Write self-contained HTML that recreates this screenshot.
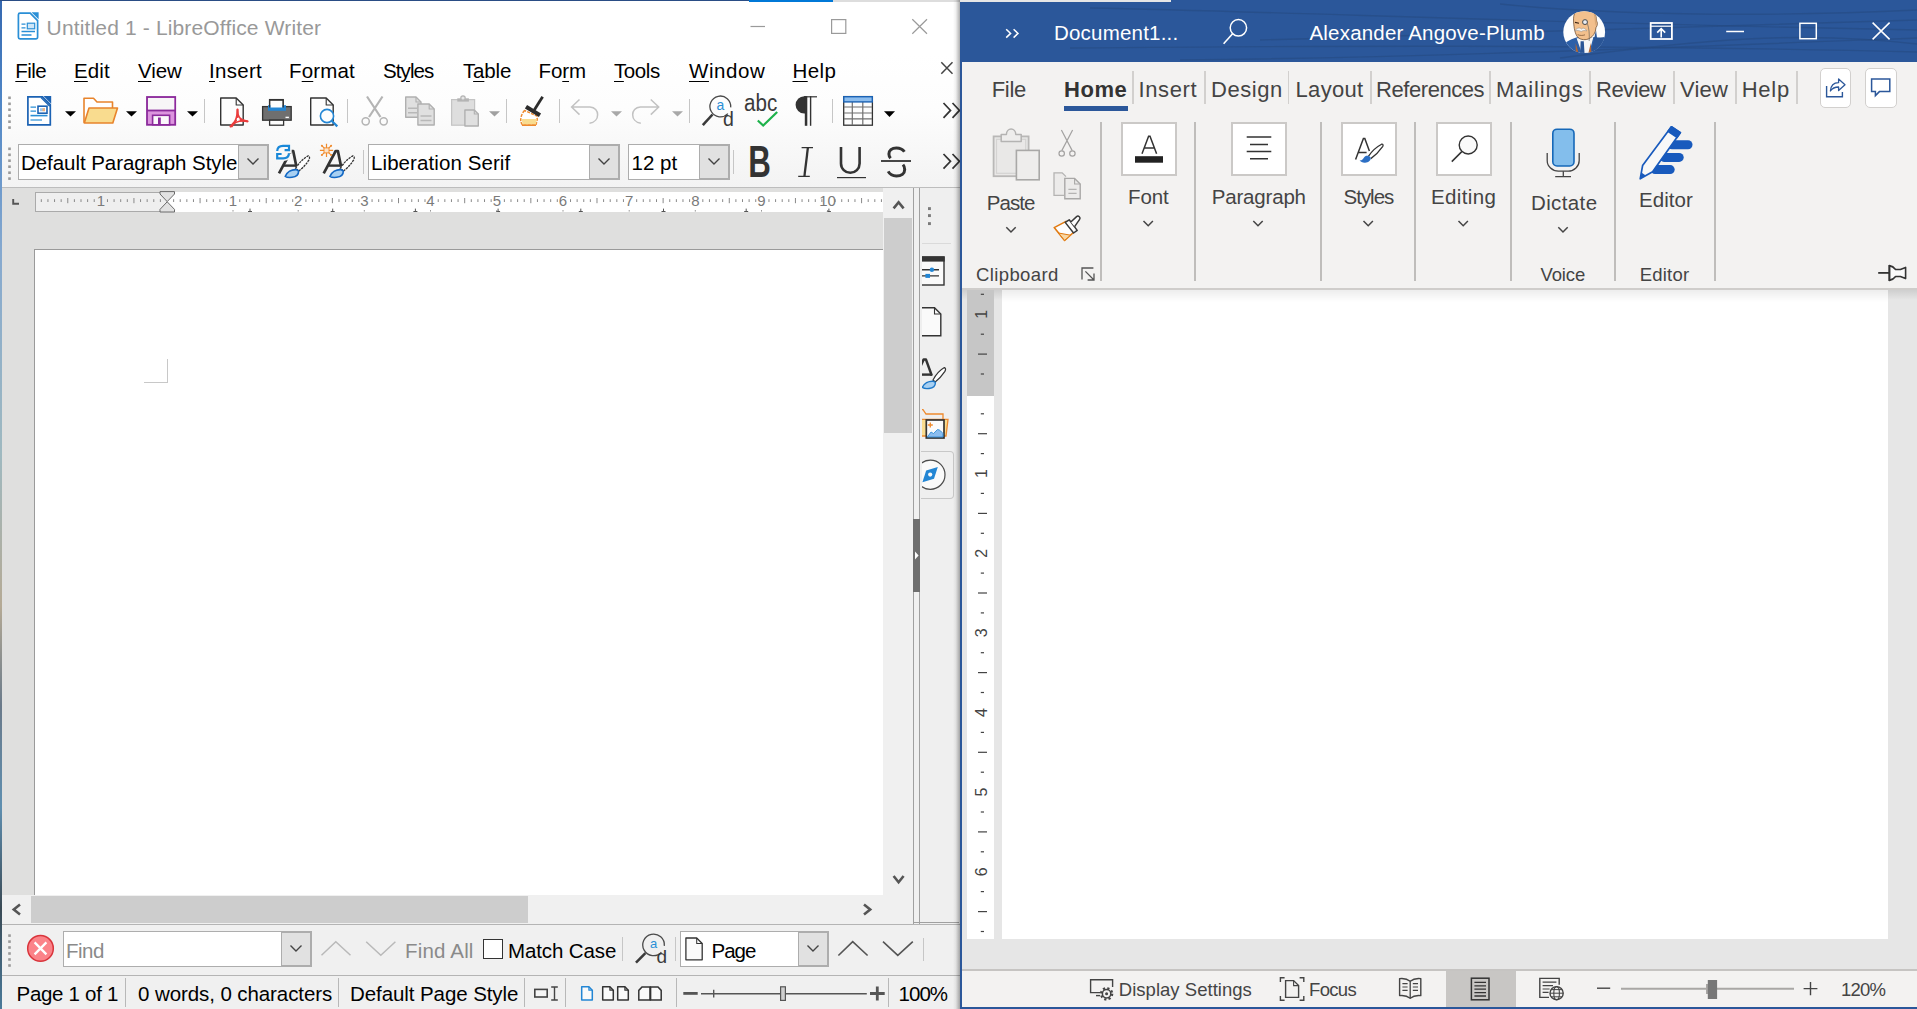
<!DOCTYPE html>
<html><head><meta charset="utf-8"><title>LibreOffice Writer and Word</title>
<style>
html,body{margin:0;padding:0;}
body{width:1917px;height:1009px;overflow:hidden;position:relative;background:#fff;font-family:"Liberation Sans", sans-serif;}
.a{position:absolute;display:block;box-sizing:border-box;}
.t{white-space:pre;}
u{text-decoration:underline;text-underline-offset:2.5px;text-decoration-thickness:1px;}
</style></head><body>
<div class="a" style="left:0px;top:0px;width:960px;height:1009px;background:#ffffff;"></div>
<div class="a" style="left:0px;top:54px;width:960px;height:134px;background:linear-gradient(#ffffff 0%,#fdfdfd 40%,#f3f3f3 100%);"></div>
<div class="a" style="left:0px;top:187px;width:960px;height:1px;background:#bdbdbd;"></div>
<div class="a" style="left:0px;top:188px;width:883px;height:707px;background:#dfdfde;"></div>
<div class="a" style="left:35px;top:192px;width:848px;height:20px;background:#ffffff;"></div>
<div class="a" style="left:35px;top:192px;width:132px;height:20px;background:#efefef;border:1px solid #aaaaaa;border-right:none;"></div>
<div class="a" style="left:34px;top:249px;width:849px;height:646px;background:#ffffff;border-left:1px solid #9a9a9a;border-top:1px solid #9a9a9a;"></div>
<div class="a" style="left:167px;top:359px;width:1px;height:24px;background:#c8c8c8;"></div>
<div class="a" style="left:144px;top:382px;width:24px;height:1px;background:#c8c8c8;"></div>
<div class="a" style="left:883px;top:188px;width:30px;height:707px;background:#f0f0f0;"></div>
<div class="a" style="left:884px;top:218px;width:28px;height:215px;background:#cdcdcd;"></div>
<div class="a" style="left:0px;top:895px;width:913px;height:29px;background:#f0f0f0;"></div>
<div class="a" style="left:31px;top:896px;width:497px;height:27px;background:#cdcdcd;"></div>
<div class="a" style="left:913px;top:188px;width:7px;height:736px;background:#f0f0f0;border-left:1px solid #a0a0a0;border-right:1px solid #a0a0a0;"></div>
<div class="a" style="left:913px;top:519px;width:7px;height:73px;background:#6e6e6e;"></div>
<div class="a" style="left:920px;top:188px;width:40px;height:736px;background:#efefef;"></div>
<div class="a" style="left:913px;top:922px;width:46px;height:1px;background:#a0a0a0;"></div>
<div class="a" style="left:0px;top:924px;width:960px;height:1px;background:#b4b4b4;"></div>
<div class="a" style="left:0px;top:925px;width:960px;height:50px;background:#f0f0f0;"></div>
<div class="a" style="left:0px;top:975px;width:960px;height:1px;background:#b4b4b4;"></div>
<div class="a" style="left:0px;top:976px;width:960px;height:33px;background:#f0f0f0;"></div>
<div class="a" style="left:0px;top:0px;width:2px;height:1009px;background:linear-gradient(#3568b0 0%,#4f86c6 10%,#86a9cf 25%,#9fb9c0 45%,#b5aa95 60%,#6a7a8a 70%,#5f8fb0 80%,#3a4a55 90%,#4a7a9a 100%);"></div>
<div class="a" style="left:0px;top:0px;width:960px;height:1px;background:#2a4d85;"></div>
<div class="a" style="left:749px;top:0px;width:84px;height:2px;background:#0078d7;"></div>
<div class="a" style="left:833px;top:0px;width:127px;height:2px;background:#dddddd;"></div>
<div class="a" style="left:18px;top:144px;width:251px;height:36px;background:#ffffff;border:1px solid #adadad;"></div>
<div class="a" style="left:238px;top:145px;width:30px;height:34px;background:#e1e1e1;border:1px solid #adadad;"></div>
<svg class="a" style="left:246.0px;top:157.0px;" width="14" height="9" viewBox="0 0 14 9"><path d="M1.5 1.5 L7 7 L12.5 1.5" fill="none" stroke="#444" stroke-width="1.4"/></svg>
<div class="a" style="left:368px;top:144px;width:252px;height:36px;background:#ffffff;border:1px solid #adadad;"></div>
<div class="a" style="left:589px;top:145px;width:30px;height:34px;background:#e1e1e1;border:1px solid #adadad;"></div>
<svg class="a" style="left:597.0px;top:157.0px;" width="14" height="9" viewBox="0 0 14 9"><path d="M1.5 1.5 L7 7 L12.5 1.5" fill="none" stroke="#444" stroke-width="1.4"/></svg>
<div class="a" style="left:628px;top:144px;width:102px;height:36px;background:#ffffff;border:1px solid #adadad;"></div>
<div class="a" style="left:699px;top:145px;width:30px;height:34px;background:#e1e1e1;border:1px solid #adadad;"></div>
<svg class="a" style="left:707.0px;top:157.0px;" width="14" height="9" viewBox="0 0 14 9"><path d="M1.5 1.5 L7 7 L12.5 1.5" fill="none" stroke="#444" stroke-width="1.4"/></svg>
<div class="a" style="left:63px;top:931px;width:249px;height:36px;background:#ffffff;border:1px solid #adadad;"></div>
<div class="a" style="left:281px;top:932px;width:30px;height:34px;background:#e1e1e1;border:1px solid #adadad;"></div>
<svg class="a" style="left:289.0px;top:944.0px;" width="14" height="9" viewBox="0 0 14 9"><path d="M1.5 1.5 L7 7 L12.5 1.5" fill="none" stroke="#444" stroke-width="1.4"/></svg>
<div class="a" style="left:483px;top:939px;width:20px;height:20px;background:#ffffff;border:1.3px solid #333;"></div>
<div class="a" style="left:680px;top:931px;width:149px;height:36px;background:#ffffff;border:1px solid #adadad;"></div>
<div class="a" style="left:798px;top:932px;width:30px;height:34px;background:#e1e1e1;border:1px solid #adadad;"></div>
<svg class="a" style="left:806.0px;top:944.0px;" width="14" height="9" viewBox="0 0 14 9"><path d="M1.5 1.5 L7 7 L12.5 1.5" fill="none" stroke="#444" stroke-width="1.4"/></svg>
<div class="a" style="left:125px;top:978px;width:1px;height:29px;background:#b8b8b8;"></div>
<div class="a" style="left:338px;top:978px;width:1px;height:29px;background:#b8b8b8;"></div>
<div class="a" style="left:524px;top:978px;width:1px;height:29px;background:#b8b8b8;"></div>
<div class="a" style="left:565px;top:978px;width:1px;height:29px;background:#b8b8b8;"></div>
<div class="a" style="left:676px;top:978px;width:1px;height:29px;background:#b8b8b8;"></div>
<div class="a" style="left:888px;top:978px;width:1px;height:29px;background:#b8b8b8;"></div>
<svg class="a" style="left:16px;top:11px;" width="24" height="30" viewBox="16 11 24 30">
<path d="M20 13.2H30.2L37.6 20.6V37.2a1.6 1.6 0 0 1-1.6 1.6H20a1.6 1.6 0 0 1-1.6-1.6V14.8a1.6 1.6 0 0 1 1.6-1.6Z" fill="#fff" stroke="#2a8fd6" stroke-width="1.7"/>
<path d="M31.5 12.2H38.6V19.3Z" fill="#2a8fd6"/>
<path d="M21.5 24.2H25.5M21.5 27.8H25.5M21.5 31.5H35M21.5 35H31.5" stroke="#2a8fd6" stroke-width="1.3" fill="none"/>
<rect x="27.3" y="23.2" width="7.4" height="5.6" fill="#cfe6f7" stroke="#2a8fd6" stroke-width="1.2"/>
</svg>
<svg class="a" style="left:749px;top:17px;" width="180" height="19" viewBox="749 17 180 19">
<path d="M750.5 26.5H765" stroke="#9a9a9a" stroke-width="1.2"/>
<rect x="831.6" y="19.6" width="14.2" height="13.8" fill="none" stroke="#9a9a9a" stroke-width="1.2"/>
<path d="M912.3 19.3L927 33.7M927 19.3L912.3 33.7" stroke="#9a9a9a" stroke-width="1.2"/>
</svg>
<svg class="a" style="left:940px;top:61px;" width="14" height="14" viewBox="940 61 14 14"><path d="M941.3 62.3L952.5 73.7M952.5 62.3L941.3 73.7" stroke="#444" stroke-width="1.5"/></svg>
<svg class="a" style="left:7px;top:95px;" width="5" height="35" viewBox="7 95 5 35"><rect x="8.2" y="96.5" width="2.6" height="2.6" fill="#9a9a9a"/><rect x="8.2" y="102.5" width="2.6" height="2.6" fill="#9a9a9a"/><rect x="8.2" y="108.4" width="2.6" height="2.6" fill="#9a9a9a"/><rect x="8.2" y="114.4" width="2.6" height="2.6" fill="#9a9a9a"/><rect x="8.2" y="120.4" width="2.6" height="2.6" fill="#9a9a9a"/><rect x="8.2" y="126.3" width="2.6" height="2.6" fill="#9a9a9a"/></svg>
<svg class="a" style="left:7px;top:146px;" width="5" height="35" viewBox="7 146 5 35"><rect x="8.2" y="147.5" width="2.6" height="2.6" fill="#9a9a9a"/><rect x="8.2" y="153.5" width="2.6" height="2.6" fill="#9a9a9a"/><rect x="8.2" y="159.39999999999998" width="2.6" height="2.6" fill="#9a9a9a"/><rect x="8.2" y="165.39999999999998" width="2.6" height="2.6" fill="#9a9a9a"/><rect x="8.2" y="171.39999999999998" width="2.6" height="2.6" fill="#9a9a9a"/><rect x="8.2" y="177.29999999999998" width="2.6" height="2.6" fill="#9a9a9a"/></svg>
<svg class="a" style="left:7px;top:933px;" width="5" height="35" viewBox="7 933 5 35"><rect x="8.2" y="934.3000000000001" width="2.6" height="2.6" fill="#9a9a9a"/><rect x="8.2" y="940.3000000000001" width="2.6" height="2.6" fill="#9a9a9a"/><rect x="8.2" y="946.2" width="2.6" height="2.6" fill="#9a9a9a"/><rect x="8.2" y="952.2" width="2.6" height="2.6" fill="#9a9a9a"/><rect x="8.2" y="958.2" width="2.6" height="2.6" fill="#9a9a9a"/><rect x="8.2" y="964.2" width="2.6" height="2.6" fill="#9a9a9a"/></svg>
<svg class="a" style="left:26px;top:95px;" width="27" height="32" viewBox="26 95 27 32">
<path d="M27.9 96.9H42.5L50.3 104.7V124.9H27.9Z" fill="#fff" stroke="#1b62b3" stroke-width="1.7"/>
<path d="M43.5 96.1H51.2V103.8Z" fill="#1b62b3"/>
<path d="M41 97.5L49.8 106.3" stroke="#1b62b3" stroke-width="1.3"/>
<path d="M30.5 107.2H36M30.5 111.2H36" stroke="#2a8fd6" stroke-width="1.3"/>
<path d="M30.5 115.6H47.5" stroke="#2a8fd6" stroke-width="1.6"/>
<path d="M30.5 120H42" stroke="#2a8fd6" stroke-width="1.2"/>
<rect x="38" y="106.2" width="9" height="7" fill="#fff" stroke="#1b62b3" stroke-width="1.6"/>
<rect x="40" y="108.2" width="5" height="3" fill="#9cc8ee"/><rect x="42.5" y="108.2" width="2.5" height="3" fill="#f3b27a"/>
</svg>
<svg class="a" style="left:64px;top:110px;" width="13" height="8" viewBox="64 110 13 8"><path d="M65 111.2H76L70.5 116.6Z" fill="#000"/></svg>
<svg class="a" style="left:82px;top:96px;" width="38" height="29" viewBox="82 96 38 29">
<path d="M84 122.8V98.2H93.5L97 102H112.5V108" fill="#fff" stroke="#e8842c" stroke-width="1.6" stroke-linejoin="round"/>
<path d="M84.3 123L89 108H117.5L112.8 123Z" fill="#f9dc8f" stroke="#e8842c" stroke-width="1.6" stroke-linejoin="round"/>
</svg>
<svg class="a" style="left:125px;top:110px;" width="13" height="8" viewBox="125 110 13 8"><path d="M126 111.2H137L131.5 116.6Z" fill="#000"/></svg>
<svg class="a" style="left:145px;top:95px;" width="33" height="32" viewBox="145 95 33 32">
<rect x="147" y="97" width="28.2" height="27.8" fill="#dc94de" stroke="#8b2a9b" stroke-width="1.8"/>
<rect x="148" y="98" width="26.2" height="12" fill="#f7f5f7"/>
<path d="M147 110.5H175.2" stroke="#8b2a9b" stroke-width="1.8"/>
<rect x="152.6" y="115.3" width="17" height="9.5" fill="#fbf8fb" stroke="#8b2a9b" stroke-width="1.6"/>
<rect x="158" y="117.5" width="2.8" height="7" fill="#8b2a9b"/>
</svg>
<svg class="a" style="left:186px;top:110px;" width="13" height="8" viewBox="186 110 13 8"><path d="M187 111.2H198L192.5 116.6Z" fill="#000"/></svg>
<div class="a" style="left:204px;top:99.2px;width:1px;height:23.599999999999994px;background:#c6c6c6;"></div>
<svg class="a" style="left:218px;top:96px;" width="31" height="32" viewBox="218 96 31 32"><path d="M220.7 98H236.2L243.2 105V125H220.7Z" fill="#fdfdfd" stroke="#333" stroke-width="1.4" stroke-linejoin="round"/><path d="M236.2 98V105H243.2" fill="none" stroke="#333" stroke-width="1.1199999999999999" stroke-linejoin="round"/>
<path d="M232 126.5C236 121 237.5 116 237.5 109.5C237.5 116 239 119.5 247.5 121.5C240 120 235 121.5 231 126.5Z" fill="none" stroke="#ea3c3c" stroke-width="1.6" stroke-linejoin="round"/>
<path d="M237.5 109.5V117M230.5 126.5L236 120.5M247.5 121.3L240.5 120" stroke="#ea3c3c" stroke-width="2" stroke-linecap="round"/>
</svg>
<svg class="a" style="left:260px;top:98px;" width="34" height="29" viewBox="260 98 34 29">
<rect x="269.6" y="99.6" width="13.6" height="9" fill="#fdfdfd" stroke="#333" stroke-width="1.3"/>
<rect x="262.6" y="106.6" width="28.6" height="13.6" fill="#6f6f6f" stroke="#333" stroke-width="1.3"/>
<rect x="268" y="105.2" width="18" height="5.6" fill="#2386d4"/>
<rect x="270.6" y="101" width="11.6" height="6.5" fill="#fdfdfd"/>
<path d="M269.6 107.5V100 H283.2V107.5" fill="none" stroke="#333" stroke-width="1.3"/>
<rect x="269.6" y="120.2" width="14" height="5" fill="#fdfdfd" stroke="#333" stroke-width="1.3"/>
<rect x="285.5" y="116.7" width="3.4" height="1.4" fill="#fff"/>
</svg>
<svg class="a" style="left:308px;top:96px;" width="32" height="33" viewBox="308 96 32 33"><path d="M310.7 98H326.2L333.2 105V125H310.7Z" fill="#fdfdfd" stroke="#333" stroke-width="1.4" stroke-linejoin="round"/><path d="M326.2 98V105H333.2" fill="none" stroke="#333" stroke-width="1.1199999999999999" stroke-linejoin="round"/>
<circle cx="327" cy="116" r="6.6" fill="#fdfdfd" stroke="#2386d4" stroke-width="1.6"/>
<path d="M331.6 120.8L337.3 126.4" stroke="#2386d4" stroke-width="2.2"/>
</svg>
<div class="a" style="left:347px;top:99.2px;width:1px;height:23.599999999999994px;background:#c6c6c6;"></div>
<svg class="a" style="left:359px;top:95px;" width="31" height="32" viewBox="359 95 31 32">
<path d="M367 96.5L380.5 117M382.5 96.5L369 117" stroke="#b4b4b4" stroke-width="2.2"/>
<circle cx="365.7" cy="121.3" r="3.6" fill="none" stroke="#b4b4b4" stroke-width="1.5"/>
<circle cx="383.7" cy="121.3" r="3.6" fill="none" stroke="#b4b4b4" stroke-width="1.5"/>
</svg>
<svg class="a" style="left:403px;top:95px;" width="34" height="32" viewBox="403 95 34 32"><path d="M405.7 97H416L421 102V117.3H405.7Z" fill="#e0e0e0" stroke="#b0b0b0" stroke-width="1.4" stroke-linejoin="round"/><path d="M416 97V102H421" fill="none" stroke="#b0b0b0" stroke-width="1.1199999999999999" stroke-linejoin="round"/><path d="M408 108.3H417M408 112.8H417" stroke="#b8b8b8" stroke-width="1.4"/><path d="M417.9 104H429.2L434.2 109V125H417.9Z" fill="#e0e0e0" stroke="#b0b0b0" stroke-width="1.4" stroke-linejoin="round"/><path d="M429.2 104V109H434.2" fill="none" stroke="#b0b0b0" stroke-width="1.1199999999999999" stroke-linejoin="round"/><path d="M420.5 116H431.5M420.5 120.5H431.5" stroke="#b8b8b8" stroke-width="1.4"/></svg>
<svg class="a" style="left:449px;top:94px;" width="32" height="34" viewBox="449 94 32 34">
<rect x="451.6" y="99.6" width="23" height="25.6" fill="#dedede" stroke="#c4c4c4" stroke-width="1.2"/>
<rect x="457.3" y="98.3" width="11.6" height="3.3" fill="#b4b4b4"/>
<circle cx="463" cy="98" r="2.2" fill="#e6e6e6" stroke="#b4b4b4" stroke-width="1.2"/>
<path d="M464.9 110H474.3L478.3 114V126H464.9Z" fill="#e0e0e0" stroke="#b0b0b0" stroke-width="1.4" stroke-linejoin="round"/><path d="M474.3 110V114H478.3" fill="none" stroke="#b0b0b0" stroke-width="1.1199999999999999" stroke-linejoin="round"/></svg>
<svg class="a" style="left:488px;top:110px;" width="13" height="8" viewBox="488 110 13 8"><path d="M489 111.2H500L494.5 116.6Z" fill="#a0a0a0"/></svg>
<div class="a" style="left:506px;top:99.2px;width:1px;height:23.599999999999994px;background:#c6c6c6;"></div>
<svg class="a" style="left:518px;top:95px;" width="28" height="33" viewBox="518 95 28 33">
<path d="M524.5 110.5C521 114.5 520.5 119 520.8 122L522.5 125H536L537.2 119.5 537 116Z" fill="#fff" stroke="#ee8a2e" stroke-width="1.5" stroke-linejoin="round" stroke-dasharray="3 1.2"/>
<path d="M521.5 119H536.7L536 124.6H522.8Z" fill="#f9dc8f"/>
<path d="M522 125.2H536" stroke="#ee8a2e" stroke-width="1.6"/>
<path d="M526 106.8L540 115.2" stroke="#2c2c2c" stroke-width="4.2"/>
<path d="M534.3 110L542.6 96.8" stroke="#2c2c2c" stroke-width="2.8"/>
</svg>
<div class="a" style="left:559px;top:99.2px;width:1px;height:23.599999999999994px;background:#c6c6c6;"></div>
<svg class="a" style="left:569px;top:97px;" width="31" height="29" viewBox="569 97 31 29">
<path d="M579.5 99.5L571.6 107L579.5 114.6M571.6 107H590C600 107.5 600.5 121.5 589.5 123.3" fill="none" stroke="#c2c2c2" stroke-width="1.5"/>
</svg>
<svg class="a" style="left:610px;top:110px;" width="13" height="8" viewBox="610 110 13 8"><path d="M611 111.2H622L616.5 116.6Z" fill="#a8a8a8"/></svg>
<svg class="a" style="left:630px;top:97px;" width="31" height="29" viewBox="630 97 31 29">
<path d="M650.8 99.5L658.7 107L650.8 114.6M658.7 107H640.3C630.3 107.5 629.8 121.5 640.8 123.3" fill="none" stroke="#c2c2c2" stroke-width="1.5"/>
</svg>
<svg class="a" style="left:671px;top:110px;" width="13" height="8" viewBox="671 110 13 8"><path d="M672 111.2H683L677.5 116.6Z" fill="#a8a8a8"/></svg>
<div class="a" style="left:689px;top:99.2px;width:1px;height:23.599999999999994px;background:#c6c6c6;"></div>
<svg class="a" style="left:700px;top:94px;" width="36" height="34" viewBox="700 94 36 34"><path d="M727.9 113.6A10.4 10.4 0 1 1 730.7 107.4" fill="none" stroke="#4a4a4a" stroke-width="1.3"/><path d="M712.5 114.5L702.8 125.2" stroke="#3a3a3a" stroke-width="2.6"/><text x="720.4" y="110.2" font-family='"Liberation Sans",sans-serif' font-size="14" fill="#2a8fd6" text-anchor="middle">a</text><text x="723" y="125.6" font-family='"Liberation Sans",sans-serif' font-size="19.5" fill="#3a3a3a">d</text></svg>
<svg class="a" style="left:743px;top:91px;" width="37" height="38" viewBox="743 91 37 38">
<text x="744" y="110.7" font-family='"Liberation Sans",sans-serif' font-size="23" fill="#3a3a3a" textLength="33.2" lengthAdjust="spacingAndGlyphs">abc</text>
<path d="M757.8 120.5L763.2 125.6L777.2 112" fill="none" stroke="#1eb24b" stroke-width="2.2"/>
</svg>
<svg class="a" style="left:793px;top:94px;" width="26" height="34" viewBox="793 94 26 34">
<path d="M806.2 96.2H804.3A8.7 8.7 0 0 0 804.3 113.6H806.2Z" fill="#333"/>
<rect x="804.8" y="96.2" width="2.5" height="29.6" fill="#333"/>
<rect x="809.9" y="96.2" width="1.4" height="29.6" fill="#333"/>
<rect x="804" y="96.2" width="13" height="1.2" fill="#333"/>
</svg>
<div class="a" style="left:832px;top:99.2px;width:1px;height:23.599999999999994px;background:#c6c6c6;"></div>
<svg class="a" style="left:841px;top:94px;" width="34" height="34" viewBox="841 94 34 34">
<rect x="843.7" y="96.6" width="28.7" height="28.6" fill="#fdfdfd" stroke="#333" stroke-width="1.3"/>
<path d="M844 107H872M844 113H872M844 118.8H872M852.3 102V125M862.8 102V125" stroke="#6f6f6f" stroke-width="1.2"/>
<rect x="843.8" y="96.7" width="28.5" height="5.2" fill="#8cbdee" stroke="#1b62b3" stroke-width="1.4"/>
</svg>
<svg class="a" style="left:883px;top:110px;" width="13" height="8" viewBox="883 110 13 8"><path d="M884 111.2H895L889.5 116.9Z" fill="#000"/></svg>
<svg class="a" style="left:941px;top:101px;" width="20" height="19" viewBox="941 101 20 19"><path d="M943.5 103L950.5 110.4L943.5 117.8M952.5 103L959.5 110.4L952.5 117.8" fill="none" stroke="#333" stroke-width="1.7"/></svg>
<svg class="a" style="left:941px;top:152px;" width="20" height="18" viewBox="941 152 20 18"><path d="M943.5 154L950.5 161.3L943.5 168.6M952.5 154L959.5 161.3L952.5 168.6" fill="none" stroke="#333" stroke-width="1.7"/></svg>
<svg class="a" style="left:274px;top:142px;" width="38" height="38" viewBox="274 142 38 38"><g transform="translate(0 0)">
<path d="M279 173.4L291 151H293.2L296.4 166.4" fill="none" stroke="#333" stroke-width="2.7" stroke-linejoin="round"/>
<path d="M283.6 165.6H296" stroke="#333" stroke-width="2.4"/>
</g><path d="M277.2 151C277.4 147.4 280 145.9 283 145.9H288.6M289 144.8V150.2H284.6M289 153.4C288.8 156.8 286.2 158.3 283.2 158.3H277.6M277.2 159.4V154H281.6" fill="none" stroke="#f8f8f8" stroke-width="5.4"/><path d="M277.2 151C277.4 147.4 280 145.9 283 145.9H288.6M289 144.8V150.2H284.6M289 153.4C288.8 156.8 286.2 158.3 283.2 158.3H277.6M277.2 159.4V154H281.6" fill="none" stroke="#1a88d8" stroke-width="2.2"/><g transform="translate(0 0)">
<path d="M295.6 168.4C299 162.6 304.4 157.6 308.2 155.8C310 156.4 309.8 158.4 308.8 160.2C305.4 165.4 301.6 169 298.8 171Z" fill="#fff" stroke="#333" stroke-width="1.3" stroke-dasharray="2.4 0.8"/>
<path d="M285.3 176.4C287 172 291.5 169.4 296.2 169.6L298.6 171C298.7 174.6 296.5 176.8 292 177.3C289 177.6 286.5 177.3 285.3 176.4Z" fill="#a8d0f2" stroke="#1368c4" stroke-width="1.6"/>
</g></svg>
<svg class="a" style="left:318px;top:142px;" width="39" height="38" viewBox="318 142 39 38"><g transform="translate(44.7 0)">
<path d="M279 173.4L291 151H293.2L296.4 166.4" fill="none" stroke="#333" stroke-width="2.7" stroke-linejoin="round"/>
<path d="M283.6 165.6H296" stroke="#333" stroke-width="2.4"/>
</g><path d="M326.5 143.8V157M319.9 150.4H333.1M321.8 145.7L331.2 155.1M331.2 145.7L321.8 155.1" stroke="#f8f8f8" stroke-width="5"/><path d="M326.5 143.8V157M319.9 150.4H333.1M321.8 145.7L331.2 155.1M331.2 145.7L321.8 155.1" stroke="#f08a2c" stroke-width="1.2"/>
<rect x="324" y="147.9" width="5" height="5" fill="#fde3c8" stroke="#f08a2c" stroke-width="0.9"/>
<circle cx="321.9" cy="145.8" r="1" fill="#f08a2c"/><circle cx="331.1" cy="145.8" r="1" fill="#f08a2c"/><circle cx="321.9" cy="155" r="1" fill="#f08a2c"/><circle cx="331.1" cy="155" r="1" fill="#f08a2c"/><g transform="translate(44.7 0)">
<path d="M295.6 168.4C299 162.6 304.4 157.6 308.2 155.8C310 156.4 309.8 158.4 308.8 160.2C305.4 165.4 301.6 169 298.8 171Z" fill="#fff" stroke="#333" stroke-width="1.3" stroke-dasharray="2.4 0.8"/>
<path d="M285.3 176.4C287 172 291.5 169.4 296.2 169.6L298.6 171C298.7 174.6 296.5 176.8 292 177.3C289 177.6 286.5 177.3 285.3 176.4Z" fill="#a8d0f2" stroke="#1368c4" stroke-width="1.6"/>
</g></svg>
<div class="a" style="left:363px;top:150.2px;width:1px;height:23.5px;background:#c6c6c6;"></div>
<div class="a" style="left:733px;top:150.2px;width:1px;height:23.5px;background:#c6c6c6;"></div>
<svg class="a" style="left:747px;top:144px;" width="26" height="35" viewBox="747 144 26 35"><text x="748.2" y="177" font-family='"Liberation Sans",sans-serif' font-weight="700" font-size="43.5" fill="#333" textLength="22.6" lengthAdjust="spacingAndGlyphs">B</text></svg>
<svg class="a" style="left:796px;top:145px;" width="19" height="34" viewBox="796 145 19 34">
<path d="M801.6 147.6H813M798.2 176.4H809.8" stroke="#333" stroke-width="1.4"/>
<path d="M807.9 147.6L804.4 176.4" stroke="#333" stroke-width="2.3"/>
</svg>
<svg class="a" style="left:835px;top:145px;" width="33" height="35" viewBox="835 145 33 35">
<path d="M841 147V163.5A9.3 9.3 0 0 0 859.6 163.5V147" fill="none" stroke="#333" stroke-width="2.6"/>
<path d="M837 177.6H866" stroke="#333" stroke-width="1.2"/>
</svg>
<svg class="a" style="left:879px;top:145px;" width="34" height="34" viewBox="879 145 34 34">
<path d="M904.4 151.8C902.6 149 899.8 147.9 896.4 147.9C891.8 147.9 888.9 150.5 888.9 154C888.9 155.6 889.5 157 890.6 158.2" fill="none" stroke="#333" stroke-width="3"/>
<path d="M888.2 171.4C889.8 174.4 892.8 176 896.4 176C901.4 176 904.7 173.4 904.7 169.4C904.7 167.6 904.1 166 903 164.6" fill="none" stroke="#333" stroke-width="3"/>
<path d="M881 161H911" stroke="#333" stroke-width="1.8"/>
</svg>
<svg class="a" style="left:34px;top:189px;" width="851" height="25" viewBox="34 189 851 25"><rect x="40.81" y="199.20" width="1" height="2.8" fill="#8a8a8a"/><rect x="47.43" y="199.20" width="1" height="2.8" fill="#8a8a8a"/><rect x="54.04" y="199.20" width="1" height="2.8" fill="#8a8a8a"/><rect x="60.66" y="199.20" width="1" height="2.8" fill="#8a8a8a"/><rect x="67.27" y="198.00" width="1" height="5.2" fill="#8a8a8a"/><rect x="73.89" y="199.20" width="1" height="2.8" fill="#8a8a8a"/><rect x="80.50" y="199.20" width="1" height="2.8" fill="#8a8a8a"/><rect x="87.12" y="199.20" width="1" height="2.8" fill="#8a8a8a"/><rect x="93.73" y="199.20" width="1" height="2.8" fill="#8a8a8a"/><rect x="106.97" y="199.20" width="1" height="2.8" fill="#8a8a8a"/><rect x="113.58" y="199.20" width="1" height="2.8" fill="#8a8a8a"/><rect x="120.19" y="199.20" width="1" height="2.8" fill="#8a8a8a"/><rect x="126.81" y="199.20" width="1" height="2.8" fill="#8a8a8a"/><rect x="133.43" y="198.00" width="1" height="5.2" fill="#8a8a8a"/><rect x="140.04" y="199.20" width="1" height="2.8" fill="#8a8a8a"/><rect x="146.66" y="199.20" width="1" height="2.8" fill="#8a8a8a"/><rect x="153.27" y="199.20" width="1" height="2.8" fill="#8a8a8a"/><rect x="159.88" y="199.20" width="1" height="2.8" fill="#8a8a8a"/><rect x="173.12" y="199.20" width="1" height="2.8" fill="#8a8a8a"/><rect x="179.73" y="199.20" width="1" height="2.8" fill="#8a8a8a"/><rect x="186.34" y="199.20" width="1" height="2.8" fill="#8a8a8a"/><rect x="192.96" y="199.20" width="1" height="2.8" fill="#8a8a8a"/><rect x="199.57" y="198.00" width="1" height="5.2" fill="#8a8a8a"/><rect x="206.19" y="199.20" width="1" height="2.8" fill="#8a8a8a"/><rect x="212.81" y="199.20" width="1" height="2.8" fill="#8a8a8a"/><rect x="219.42" y="199.20" width="1" height="2.8" fill="#8a8a8a"/><rect x="226.03" y="199.20" width="1" height="2.8" fill="#8a8a8a"/><rect x="239.27" y="199.20" width="1" height="2.8" fill="#8a8a8a"/><rect x="245.88" y="199.20" width="1" height="2.8" fill="#8a8a8a"/><rect x="252.50" y="199.20" width="1" height="2.8" fill="#8a8a8a"/><rect x="259.11" y="199.20" width="1" height="2.8" fill="#8a8a8a"/><rect x="265.73" y="198.00" width="1" height="5.2" fill="#8a8a8a"/><rect x="272.34" y="199.20" width="1" height="2.8" fill="#8a8a8a"/><rect x="278.96" y="199.20" width="1" height="2.8" fill="#8a8a8a"/><rect x="285.57" y="199.20" width="1" height="2.8" fill="#8a8a8a"/><rect x="292.19" y="199.20" width="1" height="2.8" fill="#8a8a8a"/><rect x="305.42" y="199.20" width="1" height="2.8" fill="#8a8a8a"/><rect x="312.03" y="199.20" width="1" height="2.8" fill="#8a8a8a"/><rect x="318.64" y="199.20" width="1" height="2.8" fill="#8a8a8a"/><rect x="325.26" y="199.20" width="1" height="2.8" fill="#8a8a8a"/><rect x="331.88" y="198.00" width="1" height="5.2" fill="#8a8a8a"/><rect x="338.49" y="199.20" width="1" height="2.8" fill="#8a8a8a"/><rect x="345.11" y="199.20" width="1" height="2.8" fill="#8a8a8a"/><rect x="351.72" y="199.20" width="1" height="2.8" fill="#8a8a8a"/><rect x="358.34" y="199.20" width="1" height="2.8" fill="#8a8a8a"/><rect x="371.56" y="199.20" width="1" height="2.8" fill="#8a8a8a"/><rect x="378.18" y="199.20" width="1" height="2.8" fill="#8a8a8a"/><rect x="384.80" y="199.20" width="1" height="2.8" fill="#8a8a8a"/><rect x="391.41" y="199.20" width="1" height="2.8" fill="#8a8a8a"/><rect x="398.02" y="198.00" width="1" height="5.2" fill="#8a8a8a"/><rect x="404.64" y="199.20" width="1" height="2.8" fill="#8a8a8a"/><rect x="411.25" y="199.20" width="1" height="2.8" fill="#8a8a8a"/><rect x="417.87" y="199.20" width="1" height="2.8" fill="#8a8a8a"/><rect x="424.49" y="199.20" width="1" height="2.8" fill="#8a8a8a"/><rect x="437.72" y="199.20" width="1" height="2.8" fill="#8a8a8a"/><rect x="444.33" y="199.20" width="1" height="2.8" fill="#8a8a8a"/><rect x="450.95" y="199.20" width="1" height="2.8" fill="#8a8a8a"/><rect x="457.56" y="199.20" width="1" height="2.8" fill="#8a8a8a"/><rect x="464.18" y="198.00" width="1" height="5.2" fill="#8a8a8a"/><rect x="470.79" y="199.20" width="1" height="2.8" fill="#8a8a8a"/><rect x="477.41" y="199.20" width="1" height="2.8" fill="#8a8a8a"/><rect x="484.02" y="199.20" width="1" height="2.8" fill="#8a8a8a"/><rect x="490.64" y="199.20" width="1" height="2.8" fill="#8a8a8a"/><rect x="503.87" y="199.20" width="1" height="2.8" fill="#8a8a8a"/><rect x="510.48" y="199.20" width="1" height="2.8" fill="#8a8a8a"/><rect x="517.10" y="199.20" width="1" height="2.8" fill="#8a8a8a"/><rect x="523.71" y="199.20" width="1" height="2.8" fill="#8a8a8a"/><rect x="530.33" y="198.00" width="1" height="5.2" fill="#8a8a8a"/><rect x="536.94" y="199.20" width="1" height="2.8" fill="#8a8a8a"/><rect x="543.56" y="199.20" width="1" height="2.8" fill="#8a8a8a"/><rect x="550.17" y="199.20" width="1" height="2.8" fill="#8a8a8a"/><rect x="556.79" y="199.20" width="1" height="2.8" fill="#8a8a8a"/><rect x="570.02" y="199.20" width="1" height="2.8" fill="#8a8a8a"/><rect x="576.63" y="199.20" width="1" height="2.8" fill="#8a8a8a"/><rect x="583.25" y="199.20" width="1" height="2.8" fill="#8a8a8a"/><rect x="589.86" y="199.20" width="1" height="2.8" fill="#8a8a8a"/><rect x="596.48" y="198.00" width="1" height="5.2" fill="#8a8a8a"/><rect x="603.09" y="199.20" width="1" height="2.8" fill="#8a8a8a"/><rect x="609.71" y="199.20" width="1" height="2.8" fill="#8a8a8a"/><rect x="616.32" y="199.20" width="1" height="2.8" fill="#8a8a8a"/><rect x="622.94" y="199.20" width="1" height="2.8" fill="#8a8a8a"/><rect x="636.17" y="199.20" width="1" height="2.8" fill="#8a8a8a"/><rect x="642.78" y="199.20" width="1" height="2.8" fill="#8a8a8a"/><rect x="649.40" y="199.20" width="1" height="2.8" fill="#8a8a8a"/><rect x="656.01" y="199.20" width="1" height="2.8" fill="#8a8a8a"/><rect x="662.62" y="198.00" width="1" height="5.2" fill="#8a8a8a"/><rect x="669.24" y="199.20" width="1" height="2.8" fill="#8a8a8a"/><rect x="675.86" y="199.20" width="1" height="2.8" fill="#8a8a8a"/><rect x="682.47" y="199.20" width="1" height="2.8" fill="#8a8a8a"/><rect x="689.09" y="199.20" width="1" height="2.8" fill="#8a8a8a"/><rect x="702.32" y="199.20" width="1" height="2.8" fill="#8a8a8a"/><rect x="708.93" y="199.20" width="1" height="2.8" fill="#8a8a8a"/><rect x="715.55" y="199.20" width="1" height="2.8" fill="#8a8a8a"/><rect x="722.16" y="199.20" width="1" height="2.8" fill="#8a8a8a"/><rect x="728.78" y="198.00" width="1" height="5.2" fill="#8a8a8a"/><rect x="735.39" y="199.20" width="1" height="2.8" fill="#8a8a8a"/><rect x="742.00" y="199.20" width="1" height="2.8" fill="#8a8a8a"/><rect x="748.62" y="199.20" width="1" height="2.8" fill="#8a8a8a"/><rect x="755.24" y="199.20" width="1" height="2.8" fill="#8a8a8a"/><rect x="768.47" y="199.20" width="1" height="2.8" fill="#8a8a8a"/><rect x="775.08" y="199.20" width="1" height="2.8" fill="#8a8a8a"/><rect x="781.70" y="199.20" width="1" height="2.8" fill="#8a8a8a"/><rect x="788.31" y="199.20" width="1" height="2.8" fill="#8a8a8a"/><rect x="794.93" y="198.00" width="1" height="5.2" fill="#8a8a8a"/><rect x="801.54" y="199.20" width="1" height="2.8" fill="#8a8a8a"/><rect x="808.15" y="199.20" width="1" height="2.8" fill="#8a8a8a"/><rect x="814.77" y="199.20" width="1" height="2.8" fill="#8a8a8a"/><rect x="821.38" y="199.20" width="1" height="2.8" fill="#8a8a8a"/><rect x="834.62" y="199.20" width="1" height="2.8" fill="#8a8a8a"/><rect x="841.23" y="199.20" width="1" height="2.8" fill="#8a8a8a"/><rect x="847.85" y="199.20" width="1" height="2.8" fill="#8a8a8a"/><rect x="854.46" y="199.20" width="1" height="2.8" fill="#8a8a8a"/><rect x="861.08" y="198.00" width="1" height="5.2" fill="#8a8a8a"/><rect x="867.69" y="199.20" width="1" height="2.8" fill="#8a8a8a"/><rect x="874.31" y="199.20" width="1" height="2.8" fill="#8a8a8a"/><rect x="880.92" y="199.20" width="1" height="2.8" fill="#8a8a8a"/><text x="101" y="205.8" font-family='"Liberation Sans",sans-serif' font-size="15" fill="#7a7a7a" text-anchor="middle">1</text><text x="233" y="205.8" font-family='"Liberation Sans",sans-serif' font-size="15" fill="#7a7a7a" text-anchor="middle">1</text><text x="298.2" y="205.8" font-family='"Liberation Sans",sans-serif' font-size="15" fill="#7a7a7a" text-anchor="middle">2</text><text x="364.3" y="205.8" font-family='"Liberation Sans",sans-serif' font-size="15" fill="#7a7a7a" text-anchor="middle">3</text><text x="430.5" y="205.8" font-family='"Liberation Sans",sans-serif' font-size="15" fill="#7a7a7a" text-anchor="middle">4</text><text x="496.8" y="205.8" font-family='"Liberation Sans",sans-serif' font-size="15" fill="#7a7a7a" text-anchor="middle">5</text><text x="563" y="205.8" font-family='"Liberation Sans",sans-serif' font-size="15" fill="#7a7a7a" text-anchor="middle">6</text><text x="629.2" y="205.8" font-family='"Liberation Sans",sans-serif' font-size="15" fill="#7a7a7a" text-anchor="middle">7</text><text x="695.3" y="205.8" font-family='"Liberation Sans",sans-serif' font-size="15" fill="#7a7a7a" text-anchor="middle">8</text><text x="761.5" y="205.8" font-family='"Liberation Sans",sans-serif' font-size="15" fill="#7a7a7a" text-anchor="middle">9</text><text x="827.5" y="205.8" font-family='"Liberation Sans",sans-serif' font-size="15" fill="#7a7a7a" text-anchor="middle">10</text><path d="M248.0 211.5H252.0M250.0 208.6V211.5" stroke="#555" stroke-width="1"/><path d="M330.7 211.5H334.7M332.7 208.6V211.5" stroke="#555" stroke-width="1"/><path d="M413.4 211.5H417.4M415.4 208.6V211.5" stroke="#555" stroke-width="1"/><path d="M496.1 211.5H500.1M498.1 208.6V211.5" stroke="#555" stroke-width="1"/><path d="M578.8 211.5H582.8M580.8 208.6V211.5" stroke="#555" stroke-width="1"/><path d="M661.5 211.5H665.5M663.5 208.6V211.5" stroke="#555" stroke-width="1"/><path d="M744.2 211.5H748.2M746.2 208.6V211.5" stroke="#555" stroke-width="1"/><path d="M826.9 211.5H830.9M828.9 208.6V211.5" stroke="#555" stroke-width="1"/><rect x="232.5" y="210" width="1" height="1.6" fill="#999"/><rect x="297.7" y="210" width="1" height="1.6" fill="#999"/><rect x="363.8" y="210" width="1" height="1.6" fill="#999"/><rect x="430.0" y="210" width="1" height="1.6" fill="#999"/><rect x="496.3" y="210" width="1" height="1.6" fill="#999"/><rect x="562.5" y="210" width="1" height="1.6" fill="#999"/><rect x="628.7" y="210" width="1" height="1.6" fill="#999"/><rect x="694.8" y="210" width="1" height="1.6" fill="#999"/><rect x="761.0" y="210" width="1" height="1.6" fill="#999"/><rect x="827.0" y="210" width="1" height="1.6" fill="#999"/><path d="M160 191.6H174.5V194L167.2 201.6L160 194Z" fill="#e2e2e2" stroke="#6a6a6a" stroke-width="1"/><path d="M160 212H174.5V209.4L167.2 201.8L160 209.4Z" fill="#e2e2e2" stroke="#6a6a6a" stroke-width="1"/></svg>
<svg class="a" style="left:11px;top:196px;" width="10" height="11" viewBox="11 196 10 11"><path d="M13.2 199V203.8H19" fill="none" stroke="#555" stroke-width="1.9"/></svg>
<svg class="a" style="left:892px;top:198px;" width="14" height="13" viewBox="892 198 14 13"><path d="M893.6 208.4L898.6 202.2L903.6 208.4" fill="none" stroke="#555" stroke-width="2.6"/></svg>
<svg class="a" style="left:892px;top:873px;" width="14" height="13" viewBox="892 873 14 13"><path d="M893.6 876L898.6 882.2L903.6 876" fill="none" stroke="#555" stroke-width="2.6"/></svg>
<svg class="a" style="left:10px;top:902px;" width="13" height="15" viewBox="10 902 13 15"><path d="M20 904.6L13.8 909.5L20 914.4" fill="none" stroke="#555" stroke-width="2.6"/></svg>
<svg class="a" style="left:861px;top:902px;" width="13" height="15" viewBox="861 902 13 15"><path d="M864 904.4L870.2 909.4L864 914.4" fill="none" stroke="#555" stroke-width="2.6"/></svg>
<svg class="a" style="left:913px;top:549px;" width="7" height="14" viewBox="913 549 7 14"><path d="M915 551.5L918.6 555.5L915 559.5Z" fill="#fff"/></svg>
<svg class="a" style="left:926px;top:205px;" width="7" height="22" viewBox="926 205 7 22"><rect x="928" y="207.15" width="2.9" height="2.9" fill="#7a7a7a"/><rect x="928" y="214.15" width="2.9" height="2.9" fill="#7a7a7a"/><rect x="928" y="222.15" width="2.9" height="2.9" fill="#7a7a7a"/></svg>
<div class="a" style="left:922px;top:243px;width:29px;height:1px;background:#dadada;"></div>
<svg class="a" style="left:922px;top:255px;" width="25" height="33" viewBox="922 255 25 33">
<rect x="918.7" y="257" width="25.3" height="28" fill="#fafafa" stroke="#333" stroke-width="1.4"/>
<rect x="918.7" y="256.4" width="26" height="5.2" fill="#333"/>
<path d="M920 269.8H939M920 275.9H939" stroke="#333" stroke-width="1.4"/>
<circle cx="931.9" cy="269.8" r="2.2" fill="#2386d4"/><rect x="925.4" y="273.9" width="4.6" height="4" fill="#2386d4"/>
</svg>
<svg class="a" style="left:922px;top:306px;" width="22" height="33" viewBox="922 306 22 33">
<path d="M918.7 307.7H934.5L940.8 314V335.7H918.7Z" fill="#fafafa" stroke="#333" stroke-width="1.4"/>
<path d="M934.5 307.7V314H940.8" fill="none" stroke="#333" stroke-width="1.1"/>
</svg>
<svg class="a" style="left:922px;top:357px;" width="26" height="34" viewBox="922 357 26 34">
<path d="M914 380L923.6 359.6H926L931.8 375.6" fill="none" stroke="#333" stroke-width="2.5" stroke-linejoin="round"/>
<path d="M918 374.6H932" stroke="#333" stroke-width="2.4"/>
<path d="M933 380C936 374.5 941 369.5 944.4 367.6C946 368.2 945.8 369.7 944.9 371.4C941.5 376.4 938 379.9 935.2 382Z" fill="#fff" stroke="#333" stroke-width="1.2"/>
<path d="M922.3 387.4C924 383.4 928.5 381 933 381.2L935.4 382.5C935.5 386 933.3 388 929 388.5C926 388.8 923.5 388.4 922.3 387.4Z" fill="#a8d0f2" stroke="#1e78c8" stroke-width="1.4"/>
</svg>
<svg class="a" style="left:922px;top:408px;" width="28" height="33" viewBox="922 408 28 33">
<path d="M918 436V409.6H923L926 414H943V419" fill="none" stroke="#ee8a2e" stroke-width="1.3"/>
<path d="M918 419.4H948L946 436H918Z" fill="#f9dc8f" stroke="#ee8a2e" stroke-width="1.3"/>
<rect x="926.3" y="420" width="17.7" height="18" fill="#fafafa" stroke="#333" stroke-width="1.7"/>
<path d="M927.3 437L931 432L933.5 433.5L937.5 429.5C940 429.5 941.5 432 943 433.5V437Z" fill="#8cbdee" stroke="#2386d4" stroke-width="0.8"/>
<path d="M930.3 422.5V427.5M927.8 425H932.8" stroke="#f08a2c" stroke-width="1.3"/>
</svg>
<div class="a" style="left:921px;top:451px;width:33px;height:48px;border:1px solid #c8c8c8;border-left:none;border-radius:0 4px 4px 0;"></div>
<svg class="a" style="left:922px;top:458px;" width="26" height="35" viewBox="922 458 26 35">
<circle cx="930.4" cy="474.7" r="14.6" fill="#fafafa" stroke="#4a4a4a" stroke-width="1.2"/>
<path d="M937.8 467L934 478.8L922.4 482.2L926.2 470.4Z" fill="#2386d4"/>
<circle cx="930.2" cy="474.6" r="2.1" fill="#fafafa"/>
</svg>
<svg class="a" style="left:25px;top:933px;" width="31" height="31" viewBox="25 933 31 31">
<circle cx="40.5" cy="948.4" r="12.8" fill="#fb8389" stroke="#d9353c" stroke-width="1.5"/>
<path d="M34.6 942.4L46.4 954.4M46.4 942.4L34.6 954.4" stroke="#fff" stroke-width="2.3"/>
</svg>
<svg class="a" style="left:319px;top:939px;" width="34" height="19" viewBox="319 939 34 19"><path d="M321.5 955.2L335.8 941.8L350.5 955.2" fill="none" stroke="#b9b9b9" stroke-width="1.5"/></svg>
<svg class="a" style="left:364px;top:939px;" width="34" height="19" viewBox="364 939 34 19"><path d="M366.2 941.8L380.8 955.2L395.4 941.8" fill="none" stroke="#b9b9b9" stroke-width="1.5"/></svg>
<div class="a" style="left:622px;top:937.3px;width:1px;height:23.40000000000009px;background:#c6c6c6;"></div>
<svg class="a" style="left:633px;top:932px;" width="36" height="34" viewBox="633 932 36 34"><path d="M661.4 952.3A10.8 10.8 0 1 1 664.3 945.9" fill="none" stroke="#4a4a4a" stroke-width="1.3"/><path d="M645.4 953.2L636 962.6" stroke="#3a3a3a" stroke-width="2.6"/><text x="653.6" y="948.3" font-family='"Liberation Sans",sans-serif' font-size="13" fill="#2a8fd6" text-anchor="middle">a</text><text x="656.6" y="963.4" font-family='"Liberation Sans",sans-serif' font-size="19" fill="#3a3a3a">d</text></svg>
<div class="a" style="left:675px;top:937.3px;width:1px;height:23.40000000000009px;background:#c6c6c6;"></div>
<svg class="a" style="left:683px;top:935px;" width="22" height="27" viewBox="683 935 22 27"><path d="M685.9 938H696.7L702.2 943.5V959.8H685.9Z" fill="#fafafa" stroke="#333" stroke-width="1.3" stroke-linejoin="round"/><path d="M696.7 938V943.5H702.2" fill="none" stroke="#333" stroke-width="1.04" stroke-linejoin="round"/></svg>
<svg class="a" style="left:836px;top:939px;" width="34" height="19" viewBox="836 939 34 19"><path d="M838.4 955.5L852.7 941.6L867.6 955.5" fill="none" stroke="#555" stroke-width="1.6"/></svg>
<svg class="a" style="left:881px;top:939px;" width="34" height="19" viewBox="881 939 34 19"><path d="M883 941.6L897.8 955.3L912.8 941.6" fill="none" stroke="#555" stroke-width="1.6"/></svg>
<div class="a" style="left:923px;top:937.5px;width:1px;height:23.5px;background:#c6c6c6;"></div>
<svg class="a" style="left:532px;top:984px;" width="28" height="18" viewBox="532 984 28 18">
<rect x="534.8" y="989.4" width="12.4" height="7.6" fill="#f6f6f6" stroke="#444" stroke-width="1.6"/>
<path d="M551.2 987H557.8M551.2 1000H557.8M554.5 987V1000" stroke="#444" stroke-width="1.4"/>
</svg>
<svg class="a" style="left:579px;top:984px;" width="16" height="18" viewBox="579 984 16 18"><path d="M581.7 986.8H588.9L592.3 990.1999999999999V1000H581.7Z" fill="#fafafa" stroke="#2386d4" stroke-width="1.5" stroke-linejoin="round"/><path d="M588.9 986.8V990.1999999999999H592.3" fill="none" stroke="#2386d4" stroke-width="1.2000000000000002" stroke-linejoin="round"/></svg>
<svg class="a" style="left:600px;top:984px;" width="31" height="18" viewBox="600 984 31 18"><path d="M602.7 986.8H609.9L613.3 990.1999999999999V1000H602.7Z" fill="#fafafa" stroke="#333" stroke-width="1.5" stroke-linejoin="round"/><path d="M609.9 986.8V990.1999999999999H613.3" fill="none" stroke="#333" stroke-width="1.2000000000000002" stroke-linejoin="round"/><path d="M617.7 986.8H624.9L628.3 990.1999999999999V1000H617.7Z" fill="#fafafa" stroke="#333" stroke-width="1.5" stroke-linejoin="round"/><path d="M624.9 986.8V990.1999999999999H628.3" fill="none" stroke="#333" stroke-width="1.2000000000000002" stroke-linejoin="round"/></svg>
<svg class="a" style="left:636px;top:984px;" width="28" height="18" viewBox="636 984 28 18">
<path d="M638.8 1000V990.4L642 987H650V1000Z" fill="#fafafa" stroke="#333" stroke-width="1.5"/>
<path d="M650.6 1000V987H658L661.2 990.4V1000Z" fill="#fafafa" stroke="#333" stroke-width="1.5"/>
</svg>
<svg class="a" style="left:681px;top:984px;" width="206" height="19" viewBox="681 984 206 19">
<path d="M683.3 993.4H697.7" stroke="#555" stroke-width="2.8"/>
<path d="M701 993.7H866.8" stroke="#555" stroke-width="1.4"/>
<path d="M713.7 989.8V997.4" stroke="#555" stroke-width="1.4"/>
<rect x="780.6" y="986.8" width="4.8" height="13.6" fill="#cfcfcf" stroke="#555" stroke-width="1.2"/>
<path d="M870 993.5H884.7M877.3 986.4V1000.6" stroke="#555" stroke-width="2.8"/>
</svg>
<div class="a" style="left:960px;top:0px;width:957px;height:62px;background:#2b579a;"></div>
<div class="a" style="left:960px;top:62px;width:957px;height:228px;background:#f3f2f1;"></div>
<div class="a" style="left:960px;top:290px;width:957px;height:680px;background:#e6e6e6;"></div>
<div class="a" style="left:960px;top:288px;width:957px;height:2px;background:#cfcdcb;"></div>
<div class="a" style="left:960px;top:290px;width:957px;height:10px;background:linear-gradient(rgba(0,0,0,0.10),rgba(0,0,0,0));"></div>
<div class="a" style="left:1002px;top:290px;width:886px;height:649px;background:#ffffff;"></div>
<div class="a" style="left:1002px;top:290px;width:886px;height:12px;background:linear-gradient(rgba(0,0,0,0.07),rgba(0,0,0,0));"></div>
<div class="a" style="left:967px;top:290px;width:27px;height:649px;background:#ffffff;"></div>
<div class="a" style="left:967px;top:290px;width:27px;height:106px;background:#c6c6c6;"></div>
<div class="a" style="left:960px;top:970px;width:957px;height:39px;background:#f3f2f1;"></div>
<div class="a" style="left:960px;top:969px;width:957px;height:2px;background:#c6c4c2;"></div>
<div class="a" style="left:1446px;top:971px;width:70px;height:36px;background:#c8c6c4;"></div>
<div class="a" style="left:960px;top:0px;width:2px;height:1009px;background:#2b579a;"></div>
<div class="a" style="left:960px;top:1007px;width:957px;height:2px;background:#2b579a;"></div>
<div class="a" style="left:953px;top:0px;width:7px;height:1009px;background:linear-gradient(90deg,rgba(0,0,0,0),rgba(0,0,0,0.06) 40%,rgba(0,0,0,0.32));"></div>
<div class="a" style="left:960px;top:0px;width:211px;height:2px;background:#e6e6e6;"></div>
<div class="a" style="left:1064px;top:106px;width:64px;height:4.5px;background:#2b579a;"></div>
<div class="a" style="left:1132.25px;top:71px;width:1.5px;height:33px;background:#d2d0ce;"></div>
<div class="a" style="left:1204.25px;top:71px;width:1.5px;height:33px;background:#d2d0ce;"></div>
<div class="a" style="left:1287.75px;top:71px;width:1.5px;height:33px;background:#d2d0ce;"></div>
<div class="a" style="left:1370.25px;top:71px;width:1.5px;height:33px;background:#d2d0ce;"></div>
<div class="a" style="left:1489.25px;top:71px;width:1.5px;height:33px;background:#d2d0ce;"></div>
<div class="a" style="left:1589.25px;top:71px;width:1.5px;height:33px;background:#d2d0ce;"></div>
<div class="a" style="left:1673.25px;top:71px;width:1.5px;height:33px;background:#d2d0ce;"></div>
<div class="a" style="left:1735.25px;top:71px;width:1.5px;height:33px;background:#d2d0ce;"></div>
<div class="a" style="left:1796.25px;top:71px;width:1.5px;height:33px;background:#d2d0ce;"></div>
<div class="a" style="left:1820px;top:68px;width:31px;height:40px;background:#ffffff;border:1.5px solid #d2d0ce;border-radius:5px;"></div>
<div class="a" style="left:1865px;top:68px;width:32px;height:40px;background:#ffffff;border:1.5px solid #d2d0ce;border-radius:5px;"></div>
<div class="a" style="left:1100px;top:122px;width:2px;height:159px;background:#bfbdbb;"></div>
<div class="a" style="left:1194px;top:122px;width:2px;height:159px;background:#bfbdbb;"></div>
<div class="a" style="left:1320px;top:122px;width:2px;height:159px;background:#bfbdbb;"></div>
<div class="a" style="left:1414px;top:122px;width:2px;height:159px;background:#bfbdbb;"></div>
<div class="a" style="left:1510px;top:122px;width:2px;height:159px;background:#bfbdbb;"></div>
<div class="a" style="left:1614px;top:122px;width:2px;height:159px;background:#bfbdbb;"></div>
<div class="a" style="left:1714px;top:122px;width:2px;height:159px;background:#bfbdbb;"></div>
<div class="a" style="left:1121px;top:122px;width:56px;height:54px;background:#ffffff;border:2px solid #cbc9c7;"></div>
<div class="a" style="left:1231px;top:122px;width:56px;height:54px;background:#ffffff;border:2px solid #cbc9c7;"></div>
<div class="a" style="left:1341px;top:122px;width:56px;height:54px;background:#ffffff;border:2px solid #cbc9c7;"></div>
<div class="a" style="left:1436px;top:122px;width:56px;height:54px;background:#ffffff;border:2px solid #cbc9c7;"></div>
<svg class="a" style="left:959px;top:1px;" width="959" height="62" viewBox="959 1 959 62">
<g fill="none" stroke="#24497f" stroke-opacity="0.55" stroke-width="1.4">
<path d="M1090 8C1300 12 1500 22 1917 30"/>
<path d="M1070 48C1300 46 1600 44 1917 52"/>
<path d="M1260 40C1400 36 1500 34 1917 20"/>
<path d="M1180 60C1400 58 1600 50 1917 38"/>
<path d="M1500 4C1600 14 1750 18 1917 10"/>
<path d="M1560 58C1700 40 1800 30 1917 44"/>
</g></svg>
<svg class="a" style="left:1004px;top:27px;" width="17" height="13" viewBox="1004 27 17 13"><path d="M1006.2 29.2L1010.6 33.4L1006.2 37.6M1013.6 29.2L1018 33.4L1013.6 37.6" fill="none" stroke="#fff" stroke-width="1.5"/></svg>
<svg class="a" style="left:1221px;top:17px;" width="28" height="30" viewBox="1221 17 28 30"><circle cx="1238.4" cy="27.8" r="8.2" fill="none" stroke="#fff" stroke-width="1.5"/><path d="M1232.6 33.8L1223.6 43.8" stroke="#fff" stroke-width="1.6"/></svg>
<svg class="a" style="left:1561px;top:9px;" width="47" height="46" viewBox="1561 9 47 46">
<defs><clipPath id="av"><circle cx="1584.2" cy="32.1" r="20.9"/></clipPath></defs>
<g clip-path="url(#av)">
<rect x="1560" y="8" width="50" height="50" fill="#fdfdfd"/>
<path d="M1562 58L1565 43C1569 40 1574 38 1578 37H1594C1599 37.5 1603 38.5 1607 37V58Z" fill="#2c5fa8"/>
<path d="M1596 30L1597 38L1606 37L1607 58H1590Z" fill="#2a5596"/>
<path d="M1576.6 38.2L1582 53.5H1589L1593.4 37Z" fill="#f6f6f6"/>
<path d="M1580.6 41.2H1583.8L1584.6 54H1580.2Z" fill="#2a5596"/>
<path d="M1575.6 43L1578.6 53H1575.8ZM1590.8 43L1588.4 53H1591.4Z" fill="#b5652f"/>
<path d="M1573.6 22C1573 13 1575.5 9 1584 9C1593 9 1596.4 13 1596.6 21C1597.6 22 1597.8 25.5 1596 27.6C1595.6 33 1593 36.5 1589.6 38.4C1586 40.4 1580.6 40 1578 37.4C1575 34.4 1574 28 1573.6 22Z" fill="#f3c08d" stroke="#5e3d22" stroke-width="0.7"/>
<path d="M1593 12C1595.5 14 1596.4 17 1596.6 21L1595 26.5C1595 21 1594.6 16 1593 12Z" fill="#d9a877"/>
<path d="M1575 30.6C1577 27.6 1580 27.4 1581.4 29C1583 27.6 1585.4 28 1586.8 31C1584.6 30.2 1583 30.4 1581.2 31.6C1579.4 30.4 1577.4 30.2 1575 30.6Z" fill="#f4f4f4" stroke="#8a8a8a" stroke-width="0.5"/>
<circle cx="1585" cy="22.1" r="2.5" fill="#d6dce6" stroke="#444" stroke-width="0.9"/>
<circle cx="1585" cy="22.1" r="1" fill="#f4f4f4"/>
<path d="M1575 22.4L1579 23.2" stroke="#3a2414" stroke-width="1.1"/>
<path d="M1587.4 23.6C1589 28 1589.6 34 1589.2 41" stroke="#555" stroke-width="0.6" fill="none"/>
<path d="M1577.6 34.6C1580 35.8 1583 35.6 1585 34.8" stroke="#5e3d22" stroke-width="0.6" fill="none"/>
</g></svg>
<svg class="a" style="left:1648px;top:20px;" width="27" height="22" viewBox="1648 20 27 22">
<rect x="1650.7" y="23" width="21.2" height="16" fill="none" stroke="#fff" stroke-width="1.8"/>
<path d="M1650.4 26.2H1672.2" stroke="#fff" stroke-width="1.2"/>
<path d="M1661.2 37.4V28.8M1657.2 32.6L1661.2 28.6L1665.2 32.6" fill="none" stroke="#fff" stroke-width="1.6"/>
</svg>
<svg class="a" style="left:1724px;top:20px;" width="168" height="22" viewBox="1724 20 168 22">
<path d="M1726.2 31.5H1744" stroke="#fff" stroke-width="1.5"/>
<rect x="1799.9" y="23.3" width="16.4" height="15.4" fill="none" stroke="#fff" stroke-width="1.5"/>
<path d="M1872.6 22.6L1889.6 39.4M1889.6 22.6L1872.6 39.4" stroke="#fff" stroke-width="1.5"/>
</svg>
<svg class="a" style="left:1824px;top:74px;" width="23" height="26" viewBox="1824 74 23 26">
<path d="M1826.6 86V96.8H1842.4V92" fill="none" stroke="#2b579a" stroke-width="1.4"/>
<path d="M1830.4 91C1830.8 85.5 1834 82.6 1838.6 82.6V79L1845 84.8L1838.6 90.6V87C1835 87 1832.4 88 1830.4 91Z" fill="none" stroke="#2b579a" stroke-width="1.3" stroke-linejoin="round"/>
</svg>
<svg class="a" style="left:1869px;top:76px;" width="24" height="23" viewBox="1869 76 24 23"><path d="M1871.6 79H1889.8V91.6H1879.4L1875.4 95.6V91.6H1871.6Z" fill="none" stroke="#2b579a" stroke-width="1.5" stroke-linejoin="miter"/></svg>
<svg class="a" style="left:1004px;top:225px;" width="14" height="10" viewBox="1004 225 14 10"><path d="M1006.3 227.2L1011 232.0L1015.7 227.2" fill="none" stroke="#444" stroke-width="1.5"/></svg>
<svg class="a" style="left:1141px;top:219px;" width="14" height="10" viewBox="1141 219 14 10"><path d="M1143.5 221L1148.2 225.8L1152.9 221" fill="none" stroke="#444" stroke-width="1.5"/></svg>
<svg class="a" style="left:1251px;top:219px;" width="14" height="10" viewBox="1251 219 14 10"><path d="M1253.3 221L1258 225.8L1262.7 221" fill="none" stroke="#444" stroke-width="1.5"/></svg>
<svg class="a" style="left:1361px;top:219px;" width="14" height="10" viewBox="1361 219 14 10"><path d="M1363.5 221L1368.2 225.8L1372.9 221" fill="none" stroke="#444" stroke-width="1.5"/></svg>
<svg class="a" style="left:1456px;top:219px;" width="14" height="10" viewBox="1456 219 14 10"><path d="M1458.5 221L1463.2 225.8L1467.9 221" fill="none" stroke="#444" stroke-width="1.5"/></svg>
<svg class="a" style="left:1556px;top:225px;" width="14" height="10" viewBox="1556 225 14 10"><path d="M1558.3 227.2L1563 232.0L1567.7 227.2" fill="none" stroke="#444" stroke-width="1.5"/></svg>
<svg class="a" style="left:991px;top:126px;" width="51" height="57" viewBox="991 126 51 57">
<rect x="993.6" y="136.4" width="35" height="39.8" fill="#e9e8e7" stroke="#b9b8b7" stroke-width="1.8"/>
<rect x="996.5" y="139.3" width="29.2" height="34" fill="none" stroke="#d4d3d2" stroke-width="1.2"/>
<path d="M1001.2 141.4V134.6H1006.4C1006.4 127.2 1015.8 127.2 1015.8 134.6H1021.2V141.4Z" fill="#eeedec" stroke="#b4b3b2" stroke-width="1.5" stroke-linejoin="round"/>
<rect x="1016.4" y="150.4" width="22.8" height="29.4" fill="#eeedec" stroke="#a9a8a7" stroke-width="1.6"/>
</svg>
<svg class="a" style="left:1056px;top:128px;" width="23" height="31" viewBox="1056 128 23 31">
<path d="M1061.4 130L1072.2 150.6M1072.6 130L1061.8 150.6" stroke="#a3a2a1" stroke-width="1.2"/>
<circle cx="1061.7" cy="153.5" r="2.7" fill="none" stroke="#a3a2a1" stroke-width="1.2"/>
<circle cx="1072.4" cy="153.5" r="2.7" fill="none" stroke="#a3a2a1" stroke-width="1.2"/>
</svg>
<svg class="a" style="left:1052px;top:170px;" width="31" height="32" viewBox="1052 170 31 32">
<path d="M1064 195.4H1054V172.8H1062.2L1066 176.6" fill="#ecebea" stroke="#b4b3b2" stroke-width="1.3"/>
<path d="M1064.8 178.4H1074.6L1080.2 184V198.8H1064.8Z" fill="#ecebea" stroke="#a9a8a7" stroke-width="1.4"/>
<path d="M1074.6 178.4V184H1080.2" fill="none" stroke="#a9a8a7" stroke-width="1.1"/>
<path d="M1068.4 189.4H1076.6M1068.4 193.4H1076.6" stroke="#b4b3b2" stroke-width="1.2"/>
</svg>
<svg class="a" style="left:1052px;top:213px;" width="31" height="30" viewBox="1052 213 31 30">
<path d="M1054.2 227.6L1066 221.4L1074 232L1064.6 240.4Z" fill="#fdfdfd" stroke="#e17a10" stroke-width="1.6" stroke-linejoin="round"/>
<path d="M1058.5 233L1070.5 235.2L1064.6 240.4Z" fill="#f8d7a4" stroke="#e17a10" stroke-width="1"/>
<path d="M1065.2 222.4L1069.2 219.8L1077.2 230.4L1073.6 233Z" fill="#fdfdfd" stroke="#3a3a3a" stroke-width="1.5" stroke-linejoin="round"/>
<path d="M1070.8 222L1076.6 216.6C1078.4 215 1081 217.6 1079.6 219.4L1074.6 226.6" fill="#fdfdfd" stroke="#3a3a3a" stroke-width="1.5" stroke-linejoin="round"/>
</svg>
<svg class="a" style="left:1080px;top:265px;" width="17" height="18" viewBox="1080 265 17 18">
<path d="M1093.4 268H1082V279.4" fill="none" stroke="#555" stroke-width="1.3"/>
<path d="M1085.4 271.4L1094 280M1094 273.6V280H1087.6" fill="none" stroke="#555" stroke-width="1.3"/>
</svg>
<svg class="a" style="left:1133px;top:133px;" width="32" height="32" viewBox="1133 133 32 32">
<path d="M1142 153.8L1148.6 136.2H1150L1156.6 153.8M1144.4 148H1154.2" fill="none" stroke="#333" stroke-width="1.5"/>
<rect x="1135" y="156.2" width="28" height="6.5" fill="#222"/>
</svg>
<svg class="a" style="left:1245px;top:134px;" width="28" height="27" viewBox="1245 134 28 27"><path d="M1246.7 137H1271.3M1250 144.4H1268M1246.7 151.4H1271.3M1250 158.7H1268" stroke="#333" stroke-width="1.5"/></svg>
<svg class="a" style="left:1353px;top:135px;" width="32" height="29" viewBox="1353 135 32 29">
<path d="M1355.6 159.4L1363.4 138.4H1364.8L1369.4 151M1358.6 152.4H1366.6" fill="none" stroke="#333" stroke-width="1.5"/>
<path d="M1368.4 156.4C1371.5 151.5 1377.5 146.4 1382 144C1383.4 144.4 1383.2 145.6 1382.6 146.6C1379.5 151 1374.5 156 1370.8 158.6" fill="#fff" stroke="#333" stroke-width="1.3"/>
<path d="M1359.6 160.6C1362.5 160.4 1363.5 158.4 1364.4 157C1366 155 1369.4 155.4 1370.6 157.6C1371.4 160.4 1368.4 163 1364.6 162.8C1362.4 162.7 1360.6 161.8 1359.6 160.6Z" fill="#2c6fc4"/>
</svg>
<svg class="a" style="left:1449px;top:133px;" width="32" height="32" viewBox="1449 133 32 32"><circle cx="1468.2" cy="145" r="9" fill="#fafafa" stroke="#333" stroke-width="1.4"/><path d="M1461.8 151.6L1451.8 161.6" stroke="#333" stroke-width="1.5"/></svg>
<svg class="a" style="left:1544px;top:126px;" width="39" height="54" viewBox="1544 126 39 54">
<rect x="1552.8" y="129.2" width="21.2" height="36.8" rx="4.2" fill="#83beec" stroke="#1668b8" stroke-width="1.6"/>
<path d="M1547.2 153V160.4C1547.2 166.4 1552.4 171.2 1558.4 171.2H1568.2C1574.2 171.2 1579.2 166.4 1579.2 160.4V153" fill="none" stroke="#444" stroke-width="1.3"/>
<path d="M1563.3 171.2V176.6M1555.2 176.6H1571" stroke="#444" stroke-width="1.3"/>
</svg>
<svg class="a" style="left:1637px;top:124px;" width="59" height="59" viewBox="1637 124 59 59">
<path d="M1672 144.8H1688" stroke="#185abd" stroke-width="9" stroke-linecap="round"/>
<path d="M1664 157.4H1679.2" stroke="#185abd" stroke-width="9" stroke-linecap="round"/>
<path d="M1655 169.6H1670.2" stroke="#185abd" stroke-width="9" stroke-linecap="round"/>
<path d="M1671.4 126.8L1680.4 132.6L1652.6 171.8L1640.2 178.8L1642.6 165.6Z" fill="#f8f8f8" stroke="#185abd" stroke-width="1.7" stroke-linejoin="round"/>
<path d="M1671.4 126.8L1680.4 132.6L1677 137.4L1668 131.4Z" fill="#185abd" stroke="#185abd" stroke-width="1.7" stroke-linejoin="round"/>
<path d="M1640.2 178.8L1641.4 172.6L1645.8 175.6Z" fill="#185abd"/>
</svg>
<svg class="a" style="left:1877px;top:263px;" width="31" height="20" viewBox="1877 263 31 20">
<path d="M1878.2 272.9H1889" stroke="#333" stroke-width="1.8"/>
<path d="M1889.4 265.6C1892 266 1894 267.4 1895.6 269.5H1900.4L1905.6 267.4V278.6L1900.4 276.5H1895.6C1894 278.6 1892 280 1889.4 280.4Z" fill="#fafafa" stroke="#333" stroke-width="1.6" stroke-linejoin="round"/>
<path d="M1889.4 265V281" stroke="#333" stroke-width="1.8"/>
</svg>
<svg class="a" style="left:966px;top:289px;" width="29" height="651" viewBox="966 289 29 651"><rect x="980.8" y="293.7" width="3.2" height="1.2" fill="#444"/><text transform="translate(986.6 314.3) rotate(-90)" font-family='"Liberation Sans",sans-serif' font-size="16" fill="#444" text-anchor="middle">1</text><rect x="980.8" y="333.6" width="3.2" height="1.2" fill="#444"/><rect x="978" y="353.5" width="9" height="1.2" fill="#444"/><rect x="980.8" y="373.4" width="3.2" height="1.2" fill="#444"/><rect x="980.8" y="413.2" width="3.2" height="1.2" fill="#444"/><rect x="978" y="433.1" width="9" height="1.2" fill="#444"/><rect x="980.8" y="453.0" width="3.2" height="1.2" fill="#444"/><text transform="translate(986.6 473.5) rotate(-90)" font-family='"Liberation Sans",sans-serif' font-size="16" fill="#444" text-anchor="middle">1</text><rect x="980.8" y="492.8" width="3.2" height="1.2" fill="#444"/><rect x="978" y="512.8" width="9" height="1.2" fill="#444"/><rect x="980.8" y="532.7" width="3.2" height="1.2" fill="#444"/><text transform="translate(986.6 553.2) rotate(-90)" font-family='"Liberation Sans",sans-serif' font-size="16" fill="#444" text-anchor="middle">2</text><rect x="980.8" y="572.5" width="3.2" height="1.2" fill="#444"/><rect x="978" y="592.4" width="9" height="1.2" fill="#444"/><rect x="980.8" y="612.3" width="3.2" height="1.2" fill="#444"/><text transform="translate(986.6 632.8) rotate(-90)" font-family='"Liberation Sans",sans-serif' font-size="16" fill="#444" text-anchor="middle">3</text><rect x="980.8" y="652.1" width="3.2" height="1.2" fill="#444"/><rect x="978" y="672.0" width="9" height="1.2" fill="#444"/><rect x="980.8" y="691.9" width="3.2" height="1.2" fill="#444"/><text transform="translate(986.6 712.5) rotate(-90)" font-family='"Liberation Sans",sans-serif' font-size="16" fill="#444" text-anchor="middle">4</text><rect x="980.8" y="731.8" width="3.2" height="1.2" fill="#444"/><rect x="978" y="751.7" width="9" height="1.2" fill="#444"/><rect x="980.8" y="771.6" width="3.2" height="1.2" fill="#444"/><text transform="translate(986.6 792.1) rotate(-90)" font-family='"Liberation Sans",sans-serif' font-size="16" fill="#444" text-anchor="middle">5</text><rect x="980.8" y="811.4" width="3.2" height="1.2" fill="#444"/><rect x="978" y="831.3" width="9" height="1.2" fill="#444"/><rect x="980.8" y="851.2" width="3.2" height="1.2" fill="#444"/><text transform="translate(986.6 871.7) rotate(-90)" font-family='"Liberation Sans",sans-serif' font-size="16" fill="#444" text-anchor="middle">6</text><rect x="980.8" y="891.0" width="3.2" height="1.2" fill="#444"/><rect x="978" y="911.0" width="9" height="1.2" fill="#444"/><rect x="980.8" y="930.9" width="3.2" height="1.2" fill="#444"/></svg>
<svg class="a" style="left:1088px;top:977px;" width="28" height="26" viewBox="1088 977 28 26">
<path d="M1100 992.6H1090.6V979.8H1112.6V987" fill="none" stroke="#444" stroke-width="1.4"/>
<path d="M1096 995.6H1100" stroke="#444" stroke-width="1.4"/>
<circle cx="1106.6" cy="993.8" r="4.2" fill="#f3f2f1" stroke="#444" stroke-width="1.5"/>
<circle cx="1106.6" cy="993.8" r="5.6" fill="none" stroke="#444" stroke-width="2.2" stroke-dasharray="2.2 2.2"/>
<circle cx="1106.6" cy="993.8" r="1.5" fill="#444"/>
</svg>
<svg class="a" style="left:1278px;top:975px;" width="29" height="28" viewBox="1278 975 29 28">
<path d="M1280.4 982V977.8H1284.6M1299.6 977.8H1303.8V982M1303.8 996V1000.2H1299.6M1284.6 1000.2H1280.4V996" fill="none" stroke="#444" stroke-width="1.4"/>
<path d="M1285.6 980.6H1293.6L1298.6 985.6V997.4H1285.6Z" fill="none" stroke="#444" stroke-width="1.4"/>
<path d="M1293.6 980.6V985.6H1298.6" fill="none" stroke="#444" stroke-width="1.1"/>
</svg>
<svg class="a" style="left:1397px;top:976px;" width="27" height="25" viewBox="1397 976 27 25">
<path d="M1410.2 981.2C1407 978.6 1403 978.2 1399.6 978.6V995.6C1403 995.2 1407 995.6 1410.2 998.2C1413.4 995.6 1417.4 995.2 1420.8 995.6V978.6C1417.4 978.2 1413.4 978.6 1410.2 981.2Z" fill="none" stroke="#444" stroke-width="1.4" stroke-linejoin="round"/>
<path d="M1410.2 981.2V998.2" stroke="#444" stroke-width="1.3"/>
<path d="M1402.4 983.6H1407.6M1402.4 987H1407.6M1402.4 990.4H1407.6M1412.8 983.6H1418M1412.8 987H1418M1412.8 990.4H1418" stroke="#444" stroke-width="1.1"/>
</svg>
<svg class="a" style="left:1469px;top:976px;" width="23" height="27" viewBox="1469 976 23 27">
<rect x="1471.4" y="978.2" width="17.6" height="21.6" fill="none" stroke="#333" stroke-width="1.5"/>
<path d="M1474.4 982.4H1486M1474.4 985.8H1486M1474.4 989.2H1486M1474.4 992.6H1486M1474.4 996H1486" stroke="#333" stroke-width="1.3"/>
</svg>
<svg class="a" style="left:1537px;top:976px;" width="29" height="27" viewBox="1537 976 29 27">
<path d="M1549 997.4H1539.8V978.4H1559.2V984.8" fill="none" stroke="#444" stroke-width="1.4"/>
<path d="M1542.6 982.2H1556.4M1542.6 985.6H1553M1542.6 989H1549.6M1542.6 992.4H1548.6" stroke="#444" stroke-width="1.2"/>
<circle cx="1556.6" cy="993.2" r="6.6" fill="#f3f2f1" stroke="#444" stroke-width="1.4"/>
<ellipse cx="1556.6" cy="993.2" rx="2.8" ry="6.6" fill="none" stroke="#444" stroke-width="1.1"/>
<path d="M1550 993.2H1563.2M1551 989.6H1562.2M1551 996.8H1562.2" stroke="#444" stroke-width="1"/>
</svg>
<svg class="a" style="left:1595px;top:977px;" width="226" height="25" viewBox="1595 977 226 25">
<path d="M1597 988.2H1610.2" stroke="#444" stroke-width="1.4"/>
<path d="M1621 988.8H1794" stroke="#a9a7a5" stroke-width="2"/>
<rect x="1706" y="984" width="2.2" height="10" fill="#a9a7a5"/>
<rect x="1707.8" y="980" width="9.3" height="19" fill="#777"/>
<path d="M1803.6 988.6H1817.4M1810.5 982V995.2" stroke="#444" stroke-width="1.4"/>
</svg>
<span class="a t" style='left:46.60px;top:14.80px;font:normal 400 21px/25px "Liberation Sans", sans-serif;letter-spacing:0.147px;color:#999999;'>Untitled 1 - LibreOffice Writer</span>
<span class="a t" style='left:15.30px;top:57.80px;font:normal 400 20.5px/25px "Liberation Sans", sans-serif;letter-spacing:-0.544px;color:#000;'><u>F</u>ile</span>
<span class="a t" style='left:74.00px;top:57.80px;font:normal 400 20.5px/25px "Liberation Sans", sans-serif;letter-spacing:0.124px;color:#000;'><u>E</u>dit</span>
<span class="a t" style='left:138.00px;top:57.80px;font:normal 400 20.5px/25px "Liberation Sans", sans-serif;letter-spacing:-0.086px;color:#000;'><u>V</u>iew</span>
<span class="a t" style='left:209.00px;top:57.80px;font:normal 400 20.5px/25px "Liberation Sans", sans-serif;letter-spacing:0.285px;color:#000;'><u>I</u>nsert</span>
<span class="a t" style='left:289.00px;top:57.80px;font:normal 400 20.5px/25px "Liberation Sans", sans-serif;letter-spacing:0.154px;color:#000;'>F<u>o</u>rmat</span>
<span class="a t" style='left:383.00px;top:57.80px;font:normal 400 20.5px/25px "Liberation Sans", sans-serif;letter-spacing:-0.915px;color:#000;'>St<u>y</u>les</span>
<span class="a t" style='left:463.00px;top:57.80px;font:normal 400 20.5px/25px "Liberation Sans", sans-serif;letter-spacing:-0.152px;color:#000;'>T<u>a</u>ble</span>
<span class="a t" style='left:538.50px;top:57.80px;font:normal 400 20.5px/25px "Liberation Sans", sans-serif;letter-spacing:-0.083px;color:#000;'>Fo<u>r</u>m</span>
<span class="a t" style='left:614.00px;top:57.80px;font:normal 400 20.5px/25px "Liberation Sans", sans-serif;letter-spacing:-0.402px;color:#000;'><u>T</u>ools</span>
<span class="a t" style='left:689.00px;top:57.80px;font:normal 400 20.5px/25px "Liberation Sans", sans-serif;letter-spacing:0.579px;color:#000;'><u>W</u>indow</span>
<span class="a t" style='left:792.50px;top:57.80px;font:normal 400 20.5px/25px "Liberation Sans", sans-serif;letter-spacing:0.413px;color:#000;'><u>H</u>elp</span>
<span class="a t" style='left:21.00px;top:150.00px;font:normal 400 20.5px/25px "Liberation Sans", sans-serif;letter-spacing:-0.057px;color:#000;'>Default Paragraph Style</span>
<span class="a t" style='left:371.00px;top:150.00px;font:normal 400 20.5px/25px "Liberation Sans", sans-serif;letter-spacing:0.087px;color:#000;'>Liberation Serif</span>
<span class="a t" style='left:631.50px;top:150.00px;font:normal 400 20.5px/25px "Liberation Sans", sans-serif;letter-spacing:0.025px;color:#000;'>12 pt</span>
<span class="a t" style='left:66.00px;top:937.50px;font:normal 400 20.5px/25px "Liberation Sans", sans-serif;letter-spacing:-0.493px;color:#8a8a8a;'>Find</span>
<span class="a t" style='left:405.00px;top:937.50px;font:normal 400 20.5px/25px "Liberation Sans", sans-serif;letter-spacing:0.171px;color:#8a8a8a;'>Find All</span>
<span class="a t" style='left:508.00px;top:937.50px;font:normal 400 20.5px/25px "Liberation Sans", sans-serif;letter-spacing:-0.108px;color:#000;'>Match Case</span>
<span class="a t" style='left:711.50px;top:937.50px;font:normal 400 20.5px/25px "Liberation Sans", sans-serif;letter-spacing:-0.992px;color:#000;'>Page</span>
<span class="a t" style='left:16.50px;top:981.00px;font:normal 400 20.5px/25px "Liberation Sans", sans-serif;letter-spacing:-0.296px;color:#000;'>Page 1 of 1</span>
<span class="a t" style='left:138.00px;top:981.00px;font:normal 400 20.5px/25px "Liberation Sans", sans-serif;letter-spacing:-0.086px;color:#000;'>0 words, 0 characters</span>
<span class="a t" style='left:350.00px;top:981.00px;font:normal 400 20.5px/25px "Liberation Sans", sans-serif;letter-spacing:-0.082px;color:#000;'>Default Page Style</span>
<span class="a t" style='left:898.60px;top:981.30px;font:normal 400 20.5px/25px "Liberation Sans", sans-serif;letter-spacing:-1.001px;color:#000;'>100%</span>
<span class="a t" style='left:1054.00px;top:19.50px;font:normal 400 20.5px/25px "Liberation Sans", sans-serif;letter-spacing:0.207px;color:#ffffff;'>Document1...</span>
<span class="a t" style='left:1309.50px;top:19.50px;font:normal 400 20.5px/25px "Liberation Sans", sans-serif;letter-spacing:0.187px;color:#ffffff;'>Alexander Angove-Plumb</span>
<span class="a t" style='left:991.70px;top:77.10px;font:normal 400 22px/26px "Liberation Sans", sans-serif;letter-spacing:-0.305px;color:#444444;'>File</span>
<span class="a t" style='left:1064.00px;top:77.10px;font:normal 700 22px/26px "Liberation Sans", sans-serif;letter-spacing:0.537px;color:#333333;'>Home</span>
<span class="a t" style='left:1138.50px;top:77.10px;font:normal 400 22px/26px "Liberation Sans", sans-serif;letter-spacing:0.618px;color:#444444;'>Insert</span>
<span class="a t" style='left:1211.00px;top:77.10px;font:normal 400 22px/26px "Liberation Sans", sans-serif;letter-spacing:0.551px;color:#444444;'>Design</span>
<span class="a t" style='left:1295.60px;top:77.10px;font:normal 400 22px/26px "Liberation Sans", sans-serif;letter-spacing:0.292px;color:#444444;'>Layout</span>
<span class="a t" style='left:1376.00px;top:77.10px;font:normal 400 22px/26px "Liberation Sans", sans-serif;letter-spacing:-0.434px;color:#444444;'>References</span>
<span class="a t" style='left:1496.00px;top:77.10px;font:normal 400 22px/26px "Liberation Sans", sans-serif;letter-spacing:0.858px;color:#444444;'>Mailings</span>
<span class="a t" style='left:1596.00px;top:77.10px;font:normal 400 22px/26px "Liberation Sans", sans-serif;letter-spacing:-0.449px;color:#444444;'>Review</span>
<span class="a t" style='left:1680.00px;top:77.10px;font:normal 400 22px/26px "Liberation Sans", sans-serif;letter-spacing:0.200px;color:#444444;'>View</span>
<span class="a t" style='left:1741.70px;top:77.10px;font:normal 400 22px/26px "Liberation Sans", sans-serif;letter-spacing:0.763px;color:#444444;'>Help</span>
<span class="a t" style='left:986.70px;top:189.70px;font:normal 400 20.5px/25px "Liberation Sans", sans-serif;letter-spacing:-0.930px;color:#444444;'>Paste</span>
<span class="a t" style='left:1128.00px;top:183.70px;font:normal 400 20.5px/25px "Liberation Sans", sans-serif;letter-spacing:-0.108px;color:#444444;'>Font</span>
<span class="a t" style='left:1211.80px;top:183.70px;font:normal 400 20.5px/25px "Liberation Sans", sans-serif;letter-spacing:-0.192px;color:#444444;'>Paragraph</span>
<span class="a t" style='left:1343.60px;top:183.70px;font:normal 400 20.5px/25px "Liberation Sans", sans-serif;letter-spacing:-1.035px;color:#444444;'>Styles</span>
<span class="a t" style='left:1431.00px;top:183.70px;font:normal 400 20.5px/25px "Liberation Sans", sans-serif;letter-spacing:0.387px;color:#444444;'>Editing</span>
<span class="a t" style='left:1531.00px;top:189.70px;font:normal 400 20.5px/25px "Liberation Sans", sans-serif;letter-spacing:0.383px;color:#444444;'>Dictate</span>
<span class="a t" style='left:1639.00px;top:186.70px;font:normal 400 20.5px/25px "Liberation Sans", sans-serif;letter-spacing:0.055px;color:#444444;'>Editor</span>
<span class="a t" style='left:976.00px;top:263.50px;font:normal 400 18.5px/22px "Liberation Sans", sans-serif;letter-spacing:0.388px;color:#444444;'>Clipboard</span>
<span class="a t" style='left:1540.50px;top:263.50px;font:normal 400 18.5px/22px "Liberation Sans", sans-serif;letter-spacing:-0.117px;color:#444444;'>Voice</span>
<span class="a t" style='left:1639.70px;top:263.50px;font:normal 400 18.5px/22px "Liberation Sans", sans-serif;letter-spacing:0.227px;color:#444444;'>Editor</span>
<span class="a t" style='left:1118.80px;top:979.30px;font:normal 400 18.5px/22px "Liberation Sans", sans-serif;letter-spacing:0.027px;color:#444444;'>Display Settings</span>
<span class="a t" style='left:1309.00px;top:979.30px;font:normal 400 18.5px/22px "Liberation Sans", sans-serif;letter-spacing:-0.657px;color:#444444;'>Focus</span>
<span class="a t" style='left:1841.00px;top:978.90px;font:normal 400 18.5px/22px "Liberation Sans", sans-serif;letter-spacing:-0.755px;color:#444444;'>120%</span>
</body></html>
